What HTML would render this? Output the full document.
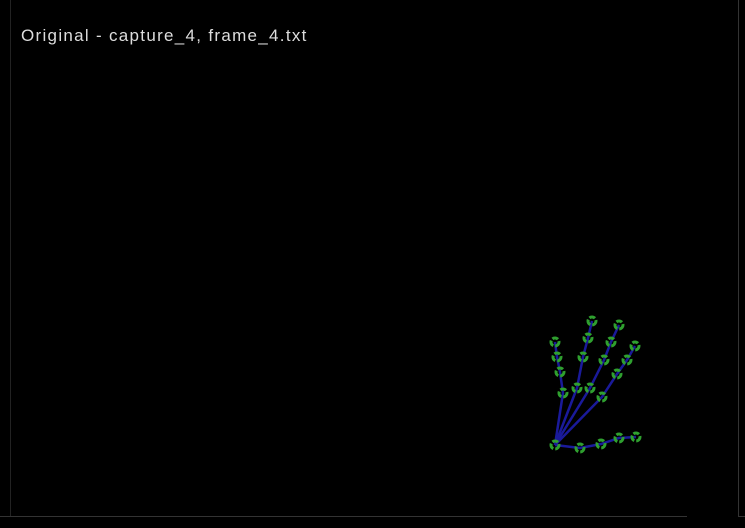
<html><body style="margin:0;width:745px;height:528px;background:#000;overflow:hidden">
<svg width="745" height="528" style="position:absolute;left:0;top:0">
<line x1="10.5" y1="0" x2="10.5" y2="516" stroke="#222" stroke-width="1"/>
<line x1="738.5" y1="0" x2="738.5" y2="516" stroke="#333" stroke-width="1"/>
<line x1="0" y1="516.5" x2="687" y2="516.5" stroke="#333" stroke-width="1"/>
<line x1="738" y1="516.5" x2="745" y2="516.5" stroke="#333" stroke-width="1"/>
<text x="21" y="41" fill="#ddd" font-family="Liberation Sans, sans-serif" font-size="17" letter-spacing="1.3">Original - capture_4, frame_4.txt</text>
<g fill="none" stroke="#1a1a9a" stroke-width="2.5">
<polyline points="555,445 580,448 601,444 619,438 636,437"/>
<polyline points="555,445 563,393 560,372 557,357 555,342"/>
<polyline points="555,445 577,388 583,357 588,338 592,321"/>
<polyline points="555,445 590,388 604,360 611,342 619,325"/>
<polyline points="555,445 602,397 617,374 627,360 635,346"/>
</g>
<g fill="none" stroke="#2fa02f" stroke-width="3" stroke-dasharray="6 2">
<circle cx="555" cy="445" r="4"/><circle cx="580" cy="448" r="4"/><circle cx="601" cy="444" r="4"/><circle cx="619" cy="438" r="4"/><circle cx="636" cy="437" r="4"/>
<circle cx="563" cy="393" r="4"/><circle cx="560" cy="372" r="4"/><circle cx="557" cy="357" r="4"/><circle cx="555" cy="342" r="4"/>
<circle cx="577" cy="388" r="4"/><circle cx="583" cy="357" r="4"/><circle cx="588" cy="338" r="4"/><circle cx="592" cy="321" r="4"/>
<circle cx="590" cy="388" r="4"/><circle cx="604" cy="360" r="4"/><circle cx="611" cy="342" r="4"/><circle cx="619" cy="325" r="4"/>
<circle cx="602" cy="397" r="4"/><circle cx="617" cy="374" r="4"/><circle cx="627" cy="360" r="4"/><circle cx="635" cy="346" r="4"/>
</g>
</svg>
</body></html>
